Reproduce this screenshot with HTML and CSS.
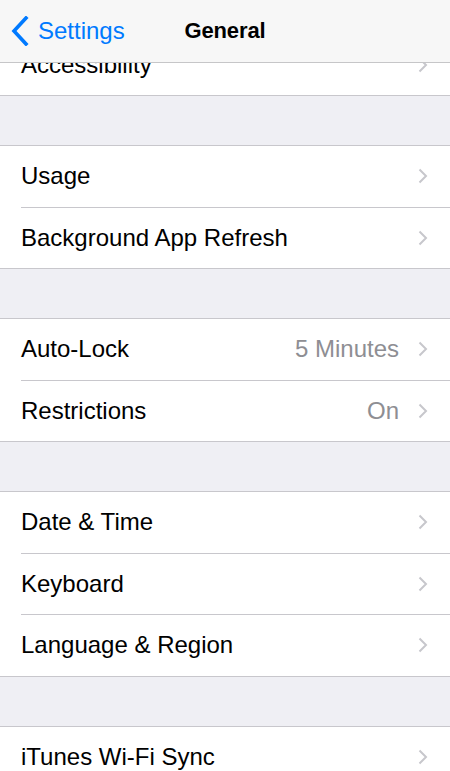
FILE: index.html
```html
<!DOCTYPE html>
<html>

<head>
    <meta name="viewport" content="width=device-width, initial-scale=1">
    <link rel="stylesheet" href="styles.css">
</head>

<body>
    <!-- Navigation bar, sits over the scrolled list -->
    <header class="navbar">
        <a class="nav-back" href="#">
            <svg class="back-chevron" width="18" height="30" viewBox="0 0 18 30">
                <polyline points="15,2 3,15 15,28" />
            </svg>
            <span>Settings</span>
        </a>
        <h1 class="nav-title">General</h1>
        <span></span>
    </header>

    <main class="table">
        <section class="group">
            <div class="row">
                <div class="row-body"><span class="label">Accessibility</span><svg class="chevron" width="10" height="16" viewBox="0 0 10 16"><polyline points="1.5,1.5 8,8 1.5,14.5" /></svg></div>
            </div>
        </section>

        <div class="spacer"></div>

        <section class="group">
            <div class="row">
                <div class="row-body"><span class="label">Usage</span><svg class="chevron" width="10" height="16" viewBox="0 0 10 16"><polyline points="1.5,1.5 8,8 1.5,14.5" /></svg></div>
            </div>
            <div class="row">
                <div class="row-body"><span class="label">Background App Refresh</span><svg class="chevron" width="10" height="16" viewBox="0 0 10 16"><polyline points="1.5,1.5 8,8 1.5,14.5" /></svg></div>
            </div>
        </section>

        <div class="spacer"></div>

        <section class="group">
            <div class="row">
                <div class="row-body"><span class="label">Auto-Lock</span><span class="value">5 Minutes</span><svg class="chevron" width="10" height="16" viewBox="0 0 10 16"><polyline points="1.5,1.5 8,8 1.5,14.5" /></svg></div>
            </div>
            <div class="row">
                <div class="row-body"><span class="label">Restrictions</span><span class="value">On</span><svg class="chevron" width="10" height="16" viewBox="0 0 10 16"><polyline points="1.5,1.5 8,8 1.5,14.5" /></svg></div>
            </div>
        </section>

        <div class="spacer"></div>

        <section class="group">
            <div class="row">
                <div class="row-body"><span class="label">Date &amp; Time</span><svg class="chevron" width="10" height="16" viewBox="0 0 10 16"><polyline points="1.5,1.5 8,8 1.5,14.5" /></svg></div>
            </div>
            <div class="row">
                <div class="row-body"><span class="label">Keyboard</span><svg class="chevron" width="10" height="16" viewBox="0 0 10 16"><polyline points="1.5,1.5 8,8 1.5,14.5" /></svg></div>
            </div>
            <div class="row">
                <div class="row-body"><span class="label">Language &amp; Region</span><svg class="chevron" width="10" height="16" viewBox="0 0 10 16"><polyline points="1.5,1.5 8,8 1.5,14.5" /></svg></div>
            </div>
        </section>

        <div class="spacer"></div>

        <section class="group">
            <div class="row">
                <div class="row-body"><span class="label">iTunes Wi-Fi Sync</span><svg class="chevron" width="10" height="16" viewBox="0 0 10 16"><polyline points="1.5,1.5 8,8 1.5,14.5" /></svg></div>
            </div>
        </section>
    </main>
</body>

</html>
```

FILE: styles.css
```css
* {
    box-sizing: border-box
}

body {
    margin: 0;
    background-color: #efeff4;
    font-family: "Liberation Sans", Helvetica, Arial, sans-serif;
    font-size: 24px;
    color: #000;
}

/* Navigation bar */
.navbar {
    position: fixed;
    top: 0;
    left: 0;
    right: 0;
    z-index: 10;
    height: 63px;
    display: grid;
    grid-template-columns: 1fr auto 1fr;
    align-items: center;
    background-color: #f7f7f7;
    border-bottom: 1px solid #c6c6c8;
}

.nav-back {
    display: flex;
    align-items: center;
    padding-left: 11px;
    color: #007aff;
    text-decoration: none;
}

.back-chevron {
    margin-right: 9px;
    fill: none;
    stroke: #007aff;
    stroke-width: 3.6;
    stroke-linecap: square;
    stroke-linejoin: miter;
}

.nav-title {
    margin: 0;
    font-size: 22px;
    font-weight: bold;
    letter-spacing: -0.1px;
}

/* Table view */
.table {
    padding-top: 33.5px;
}

.spacer {
    height: 49px;
}

.group {
    background-color: #fff;
    border-top: 1px solid #c8c7cc;
    border-bottom: 1px solid #c8c7cc;
}

.row {
    height: 61.5px;
    padding-left: 21px;
}

.row:last-child {
    height: 60.5px;
}

.row-body {
    display: flex;
    align-items: center;
    height: 100%;
    padding-right: 22px;
    border-bottom: 1px solid #c8c7cc;
}

.row:last-child .row-body {
    border-bottom: none;
}

.label {
    flex: 1;
    white-space: nowrap;
}

.value {
    color: #8e8e93;
    margin-right: 19px;
}

.chevron {
    fill: none;
    stroke: #c7c7cc;
    stroke-width: 2;
}
```
